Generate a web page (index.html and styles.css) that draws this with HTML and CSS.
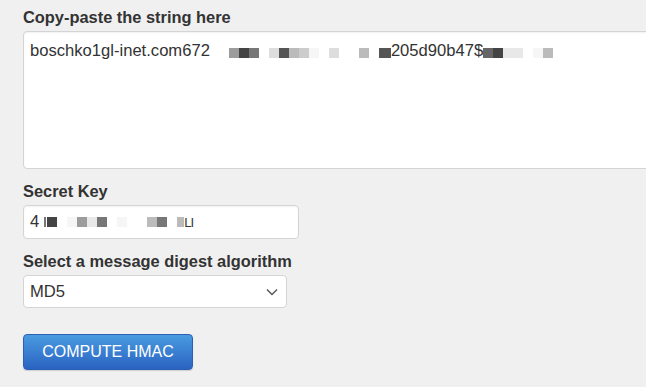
FILE: index.html
```html
<!DOCTYPE html>
<html lang="en">
  <head>
    <meta charset="UTF-8" />
    <title>HMAC Generator</title>
    <link rel="stylesheet" href="styles.css">
  </head>
  <body>
    <form class="hmac-form">
      <label class="field-label">Copy-paste the string here</label>
      <div class="text-box">
        <span>boschko1gl-inet.com672</span><span class="gap"></span><span class="px g9"></span><span class="px g4"></span><span class="px g7"></span><span class="px"></span><span class="px gd"></span><span class="px g5"></span><span class="px gb"></span><span class="px gc"></span><span class="px gf"></span><span class="px"></span><span class="px gd"></span><span class="px"></span><span class="px"></span><span class="px gb"></span><span class="px"></span><span class="px wide g5"></span><span>205d90b47$</span><span class="px g6"></span><span class="px g4"></span><span class="px ge"></span><span class="px ge"></span><span class="px"></span><span class="px gf"></span><span class="px gb"></span>
      </div>

      <label class="field-label">Secret Key</label>
      <div class="input-box key-box">
        <span>4</span><span class="bar"></span><span class="px g4"></span><span class="px"></span><span class="px gf"></span><span class="px g9"></span><span class="px ge"></span><span class="px g7"></span><span class="px"></span><span class="px gf"></span><span class="px"></span><span class="px"></span><span class="px gb"></span><span class="px g7"></span><span class="px"></span><span class="px narrow gb"></span><span class="tail">LI</span>
      </div>

      <label class="field-label">Select a message digest algorithm</label>
      <div class="input-box select-box">
        <span>MD5</span>
        <svg class="chevron" width="12" height="8" viewBox="0 0 12 8">
          <path d="M1 1.5 L6 6.5 L11 1.5" fill="none" stroke="#555" stroke-width="1.4" />
        </svg>
      </div>

      <button type="button" class="compute-btn">COMPUTE HMAC</button>
    </form>
  </body>
</html>
```

FILE: styles.css
```css
html,
body {
  margin: 0;
  background: #f0f0f0;
}

body {
  padding: 8px 23px;
  font-family: "Liberation Sans", Arial, sans-serif;
  color: #333;
  overflow: hidden;
}

.hmac-form {
  display: flex;
  flex-direction: column;
  align-items: flex-start;
}

.field-label {
  font-size: 16.4px;
  font-weight: bold;
  line-height: 18px;
  color: #333;
  margin-bottom: 5px;
}

.text-box {
  box-sizing: border-box;
  width: 640px;
  height: 138px;
  padding: 9px 6px 8px;
  background: #fff;
  border: 1px solid #d4d4d4;
  border-radius: 4px;
  box-shadow: inset 0 1px 2px rgba(0, 0, 0, 0.06);
  font-size: 16.6px;
  line-height: 20px;
  white-space: nowrap;
  margin-bottom: 13px;
}

.input-box {
  box-sizing: border-box;
  display: flex;
  align-items: center;
  background: #fff;
  border: 1px solid #d4d4d4;
  border-radius: 4px;
  padding: 0 6px;
  font-size: 16.6px;
  white-space: nowrap;
}

.key-box {
  width: 276px;
  height: 34px;
  margin-bottom: 13px;
  box-shadow: inset 0 1px 2px rgba(0, 0, 0, 0.05);
}

.select-box {
  width: 264px;
  height: 33px;
  justify-content: space-between;
  padding-right: 8px;
  margin-bottom: 26px;
}

.chevron {
  display: block;
}

/* blurred (redacted) characters */
.px {
  display: inline-block;
  width: 10px;
  height: 10px;
  vertical-align: -2px;
}

.px.wide {
  width: 12px;
}

.px.narrow {
  width: 7px;
}

.gap {
  display: inline-block;
  width: 19px;
}

.bar {
  display: inline-block;
  width: 2px;
  height: 10px;
  margin-left: 5px;
  margin-right: 1px;
  background: #777;
}

.key-box .px {
  flex: none;
}

.tail {
  font-size: 13px;
  letter-spacing: -1px;
}

.g4 { background: #444; }
.g5 { background: #555; }
.g6 { background: #666; }
.g7 { background: #777; }
.g9 { background: #9c9c9c; }
.gb { background: #bbb; }
.gc { background: #ccc; }
.gd { background: #ddd; }
.ge { background: #e8e8e8; }
.gf { background: #f6f6f6; }

.compute-btn {
  width: 170px;
  height: 36px;
  padding: 0;
  font-family: "Liberation Sans", Arial, sans-serif;
  font-size: 16px;
  color: #fff;
  background: linear-gradient(to bottom, #4a9be0, #2a63c2);
  border: 1px solid #2c60b4;
  border-radius: 4px;
  box-shadow: 0 1px 1px rgba(0, 0, 0, 0.15);
  cursor: pointer;
}
```
